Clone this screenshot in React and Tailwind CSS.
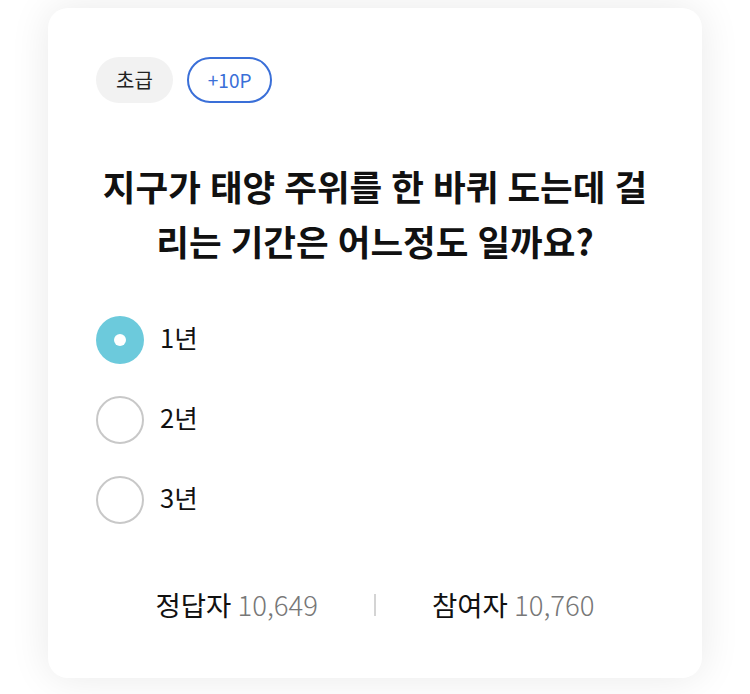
const font = { fontFamily: '"Noto Sans CJK KR", "Noto Sans", sans-serif' };

const options = ['1년', '2년', '3년'];

function Radio({ checked }) {
  if (checked) {
    return (
      <span className="flex h-[48px] w-[48px] shrink-0 items-center justify-center rounded-full bg-[#6ccadc]">
        <span className="h-[12px] w-[12px] rounded-full bg-white" />
      </span>
    );
  }
  return <span className="h-[48px] w-[48px] shrink-0 rounded-full border-2 border-[#c8c8c8] bg-white" />;
}

export default function App() {
  return (
    <div className="min-h-[694px] w-full bg-white px-[48px] pt-[8px] pb-[16px]" style={font}>
      <div className="rounded-[20px] bg-white px-[48px] pt-[49px] pb-[57px] shadow-[0_0_40px_rgba(0,0,0,0.09)]">
        {/* Badges */}
        <div className="flex items-center gap-[14px]">
          <span className="flex h-[46px] items-center rounded-full bg-[#f2f2f2] px-[20px] text-[20px] text-[#222]">
            초급
          </span>
          <span className="flex h-[46px] items-center rounded-full border-2 border-[#3a6fd8] px-[19px] text-[19px] text-[#3a6fd8]">
            +10P
          </span>
        </div>

        {/* Question */}
        <h2 className="mt-[55px] text-center text-[35.5px] font-bold leading-[55px] text-[#111] [word-spacing:1px]">
          지구가 태양 주위를 한 바퀴 도는데 걸리는 기간은 어느정도 일까요?
        </h2>

        {/* Options */}
        <ul className="mt-[48px] flex flex-col gap-[32px]">
          {options.map((label, i) => (
            <li key={label} className="flex h-[48px] items-center gap-[16px]">
              <Radio checked={i === 0} />
              <span className="-mt-[5px] text-[25.5px] text-[#111]">{label}</span>
            </li>
          ))}
        </ul>

        {/* Stats */}
        <div className="mt-[65px] flex h-[32px] items-center justify-center gap-[56px] text-[27.5px]">
          <span className="text-[#111]">
            정답자 <span className="font-light text-[#777]">10,649</span>
          </span>
          <span className="h-[22px] w-[2px] bg-[#d4d4d4]" />
          <span className="text-[#111]">
            참여자 <span className="font-light text-[#777]">10,760</span>
          </span>
        </div>
      </div>
    </div>
  );
}
